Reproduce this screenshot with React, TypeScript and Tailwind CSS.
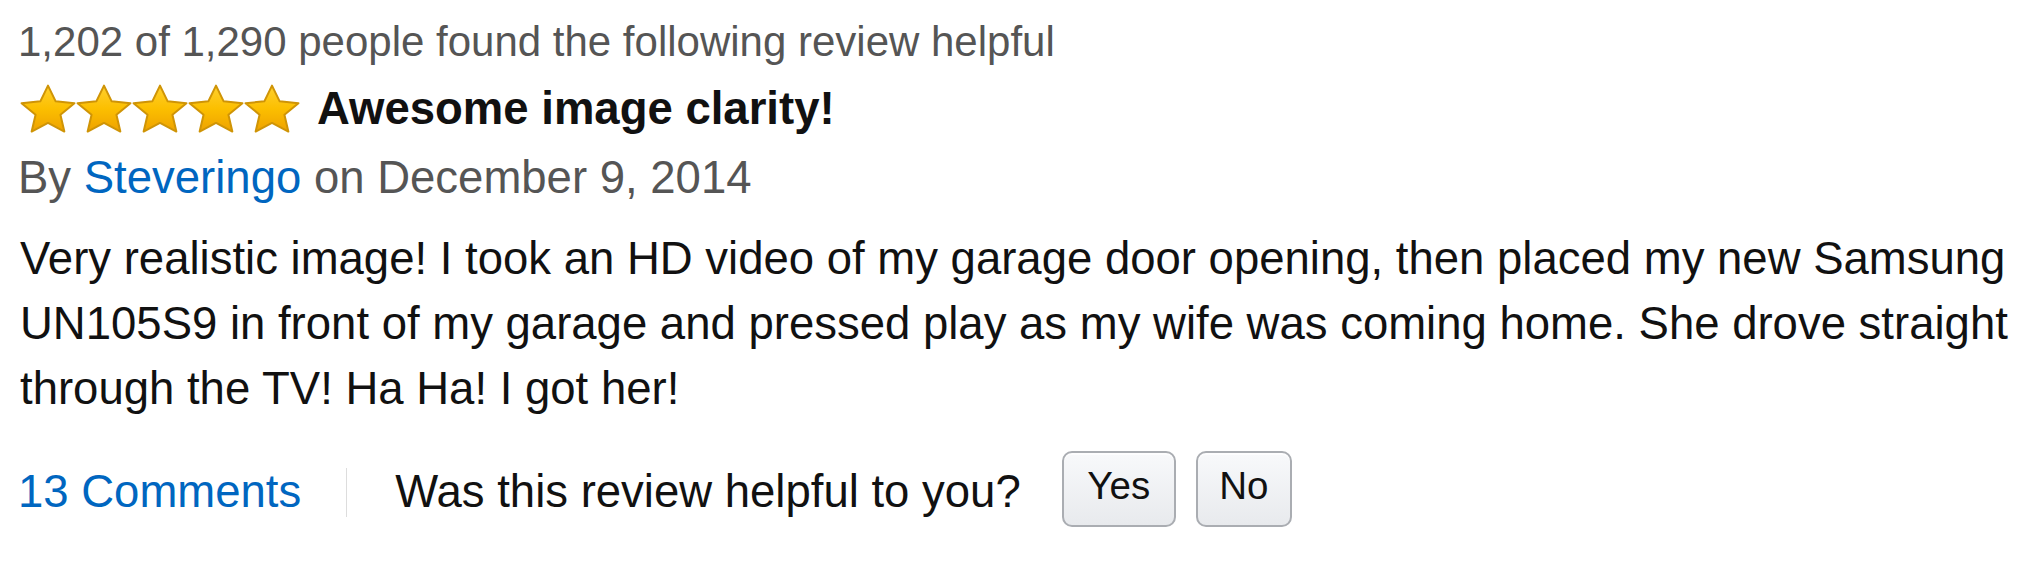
import React from "react";

const STAR_POINTS =
  "0,-25.4 7.67,-9.65 26.44,-7.85 12.43,3.68 16.35,20.55 0,11.94 -16.35,20.55 -12.43,3.68 -26.44,-7.85 -7.67,-9.65";

function Stars() {
  const centers = [0, 1, 2, 3, 4].map((i) => 30 + i * 56);
  return (
    <svg width="284" height="50" viewBox="0 0 284 50" className="shrink-0">
      <defs>
        <linearGradient id="starFill" x1="0" y1="0" x2="0" y2="1">
          <stop offset="0%" stopColor="#ffd02e" />
          <stop offset="50%" stopColor="#fcbf00" />
          <stop offset="100%" stopColor="#eea200" />
        </linearGradient>
      </defs>
      {centers.map((cx, i) => (
        <g key={i} transform={`translate(${cx}, 27)`}>
          <polygon
            points={STAR_POINTS}
            fill="url(#starFill)"
            stroke="#cf9406"
            strokeWidth="2"
            strokeLinejoin="round"
          />
        </g>
      ))}
    </svg>
  );
}

export default function App() {
  return (
    <div
      className="w-[2044px] h-[566px] bg-white pl-[18px] pr-[18px] pt-[12px] text-[#111111]"
      style={{ fontFamily: '"Liberation Sans", Arial, Helvetica, sans-serif' }}
    >
      <div className="text-[42px] leading-[60px] text-[#555555]">
        1,202 of 1,290 people found the following review helpful
      </div>

      <div className="mt-[4px] flex h-[65px] items-center">
        <Stars />
        <span className="ml-[15px] text-[45.5px] font-bold leading-[65px] text-[#111111]">
          Awesome image clarity!
        </span>
      </div>

      <div className="mt-[4px] text-[45.5px] leading-[65px] text-[#555555]">
        By <span className="text-[#0066c0]">Steveringo</span> on December 9, 2014
      </div>

      <p className="mt-[16px] pl-[2px] text-[45.5px] leading-[65px] text-[#111111]">
        Very realistic image! I took an HD video of my garage door opening, then placed my new
        Samsung UN105S9 in front of my garage and pressed play as my wife was coming home. She
        drove straight through the TV! Ha Ha! I got her!
      </p>

      <div className="mt-[30px] flex h-[76px] items-center">
        <span className="pt-[4px] text-[45.5px] leading-[65px] text-[#0066c0]">13 Comments</span>
        <div className="ml-[45px] mr-[48px] mt-[7px] h-[49px] w-px bg-[#dddddd]" />
        <span className="pt-[4px] text-[45.5px] leading-[65px] text-[#111111]">
          Was this review helpful to you?
        </span>
        <button className="ml-[41px] flex h-[76px] w-[114px] items-center justify-center rounded-[10px] border-2 border-[#aaadb2] bg-gradient-to-b from-[#f8f9fb] to-[#e8eaed] pb-[6px] text-[38.5px] leading-none text-[#111111] shadow-[inset_0_2px_0_rgba(255,255,255,0.7)]">
          Yes
        </button>
        <button className="ml-[20px] flex h-[76px] w-[96px] items-center justify-center rounded-[10px] border-2 border-[#aaadb2] bg-gradient-to-b from-[#f8f9fb] to-[#e8eaed] pb-[6px] text-[38.5px] leading-none text-[#111111] shadow-[inset_0_2px_0_rgba(255,255,255,0.7)]">
          No
        </button>
      </div>
    </div>
  );
}
